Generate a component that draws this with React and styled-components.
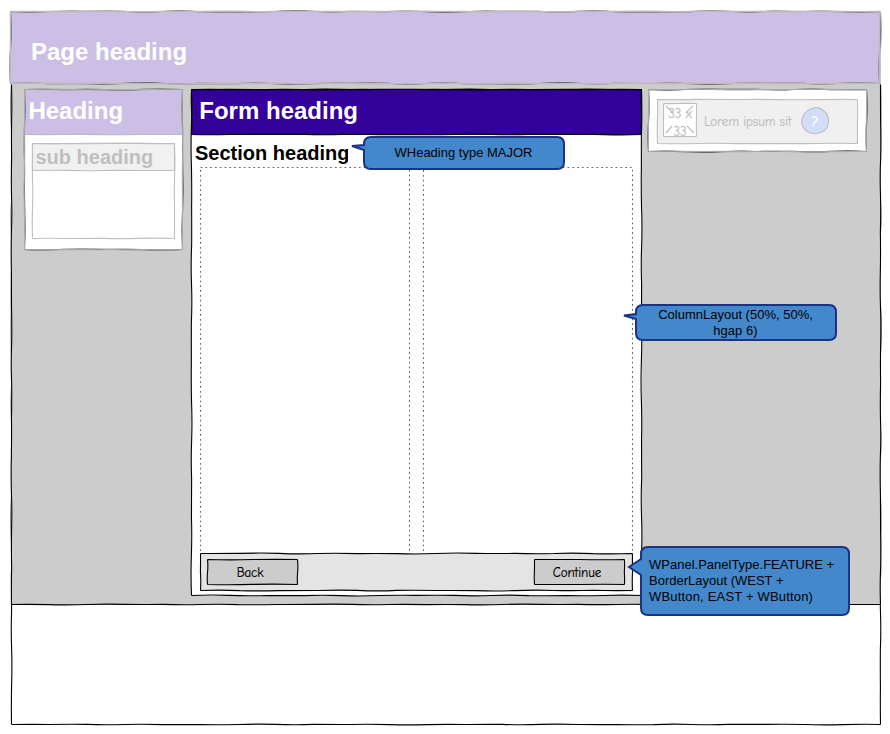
import React from "react";
import styled, { createGlobalStyle } from "styled-components";

const GlobalStyle = createGlobalStyle`
  *, *::before, *::after { box-sizing: border-box; }
  body { margin: 0; background: #fff; font-family: "Liberation Sans", Arial, sans-serif; }
`;

/* ---------- hand-drawn outlines ---------- */

const Overlay = styled.svg`
  position: absolute;
  left: 0;
  top: 0;
  overflow: visible;
  pointer-events: none;
`;

function wobble(x1, y1, x2, y2, seed, amp) {
  const length = Math.hypot(x2 - x1, y2 - y1);
  const steps = Math.max(2, Math.round(length / 38));
  const nx = (y2 - y1) / length;
  const ny = (x1 - x2) / length;
  let d = `M${x1} ${y1}`;
  for (let i = 1; i <= steps; i += 1) {
    const t = i / steps;
    const m = (i - 0.5) / steps;
    const bend = Math.sin(i * 2.3 + seed * 1.7) * amp;
    const off = i === steps ? 0 : Math.sin(i * 1.1 + seed) * amp * 0.2;
    d += `Q${(x1 + (x2 - x1) * m + nx * bend).toFixed(2)} ${(y1 + (y2 - y1) * m + ny * bend).toFixed(2)} ${(x1 + (x2 - x1) * t + nx * off).toFixed(2)} ${(y1 + (y2 - y1) * t + ny * off).toFixed(2)}`;
  }
  return d;
}

function outline(w, h, seed, amp, openTop = false) {
  const r = w - 0.5;
  const b = h - 0.5;
  return [
    openTop ? "" : wobble(0.5, 0.5, r, 0.5, seed, amp),
    wobble(r, 0.5, r, b, seed + 2, amp),
    wobble(r, b, 0.5, b, seed + 4, amp),
    wobble(0.5, b, 0.5, 0.5, seed + 6, amp),
  ].join("");
}

function Sketch({ w, h, seed = 1, color = "#000", under, amp = 0.7, openTop }) {
  return (
    <Overlay width={w} height={h} fill="none" strokeWidth="1.1" aria-hidden="true">
      {under && <path d={outline(w, h, seed + 3, 1.2)} stroke={under} />}
      <path d={outline(w, h, seed, amp, openTop)} stroke={color} />
    </Overlay>
  );
}

/* ---------- page frame ---------- */

const Page = styled.div`
  position: relative;
  width: 890px;
  height: 734px;
  padding: 11px 9px 9px 11px;
  overflow: hidden;
  background: #fff;
`;

const Frame = styled.div`
  position: relative;
  width: 870px;
  height: 714px;
  display: flex;
  flex-direction: column;
`;

const PageHeader = styled.header`
  position: relative;
  z-index: 1;
  width: 871px;
  height: 73px;
  margin-left: -1px;
  padding: 27px 0 0 21px;
  background: #cbbfe5;
`;

const Title = styled.h1`
  margin: 0;
  color: #fff;
  font-size: 24px;
  font-weight: 700;
  line-height: 28px;
  white-space: nowrap;
`;

const Body = styled.main`
  position: relative;
  height: 521px;
  display: grid;
  grid-template-columns: 159px 451px 219px;
  column-gap: 7px;
  align-items: start;
  padding: 5px 0 0 13px;
  background: #ccc;
`;

const PageFooter = styled.footer`
  flex: 1;
`;

/* ---------- panels ---------- */

const Panel = styled.section`
  position: relative;
  height: ${(p) => p.$height}px;
  margin: 0 ${(p) => -(p.$shift || 0)}px 0 ${(p) => p.$shift || 0}px;
  background: #fff;
`;

const PanelHeader = styled.div`
  position: relative;
  height: 46px;
  padding: 8px 0 0 ${(p) => p.$indent}px;
  background: ${(p) => p.$fill};
`;

const SubPanel = styled.div`
  position: relative;
  width: 143px;
  height: 96px;
  margin: 8px 0 0 7.5px;
`;

const SubHeader = styled.div`
  position: relative;
  height: 28px;
  padding: 3px 0 0 4px;
  background: #f1f1f1;
  color: #bfbfbf;
  font-size: 20px;
  font-weight: 700;
  line-height: 22px;
`;

const SectionHeading = styled.h2`
  width: 157px;
  height: 32px;
  margin: 0;
  padding: 7px 0 0 4px;
  overflow: hidden;
  font-size: 20px;
  font-weight: 700;
  line-height: 22px;
  white-space: nowrap;
`;

const Columns = styled.div`
  display: grid;
  grid-template-columns: 210px 210px;
  column-gap: 13px;
  height: 386px;
  margin-left: 9px;
`;

const Column = styled.div`
  position: relative;
`;

const FeaturePanel = styled.div`
  position: relative;
  display: flex;
  justify-content: space-between;
  width: 433px;
  height: 38px;
  margin-left: 9px;
  padding: 6px 8px 0 7px;
  background: #e4e4e4;
`;

const SketchButton = styled.button`
  position: relative;
  width: 91px;
  height: 26px;
  padding: 2px 5px 0 0;
  border: 0;
  background: #ccc;
  color: #000;
  font-family: "Comic Sans MS", "Comic Neue", Lato, sans-serif;
  font-size: 13px;
  line-height: 22px;
  letter-spacing: ${(p) => p.$tracking}px;
  -webkit-text-stroke: 0.2px #000;
`;

/* ---------- right-hand panel ---------- */

const InfoStrip = styled.div`
  position: relative;
  display: flex;
  align-items: flex-start;
  width: 201px;
  height: 45px;
  padding: 4px 0 0 6px;
  background: #f0f0f0;
  color: #bfbfbf;
  font-family: "Comic Sans MS", "Comic Neue", Lato, sans-serif;
`;

const InfoWrap = styled.div`
  padding: 10px 9px 9px;
`;

const Placeholder = styled.div`
  position: relative;
  flex: none;
  width: 34px;
  height: 34px;
  padding-top: 2px;
  background: #fff;
  font-size: 13px;
  line-height: 18px;
  text-align: center;
  white-space: pre;
  -webkit-text-stroke: 0.3px #bfbfbf;
`;

const InfoText = styled.span`
  flex: none;
  width: 98px;
  padding: 10px 0 0 7px;
  font-size: 13px;
  line-height: 18px;
  letter-spacing: -0.08px;
  white-space: nowrap;
  -webkit-text-stroke: 0.2px #bfbfbf;
`;

const Help = styled.div`
  position: relative;
  width: 28px;
  height: 28px;
  margin: 4px 0 0 6px;
  color: #fff;
  font-size: 14px;
  font-weight: 700;
  line-height: 30px;
  text-align: center;
`;

const HelpMark = styled.span`
  position: relative;
`;

/* ---------- annotations ---------- */

const CalloutBox = styled.aside`
  position: absolute;
  z-index: 2;
  left: ${(p) => p.$x}px;
  top: ${(p) => p.$y}px;
  width: ${(p) => p.$w}px;
  height: ${(p) => p.$h}px;
  display: flex;
  flex-direction: column;
  align-items: ${(p) => (p.$start ? "flex-start" : "center")};
  justify-content: center;
  padding: ${(p) => (p.$start ? "0 0 0 8px" : "0 1px 0 0")};
  color: #000;
  font-size: 13px;
  line-height: 16px;
`;

const CalloutLine = styled.span`
  position: relative;
  white-space: pre;
  letter-spacing: ${(p) => p.$tracking}px;
`;

function Callout({ x, y, w, h, tail, start, lines }) {
  const [tx, ty, top, bottom] = tail;
  const r = 7;
  const d = `M${r} 0H${w - r}Q${w} 0 ${w} ${r}V${h - r}Q${w} ${h} ${w - r} ${h}H${r}Q0 ${h} 0 ${h - r}V${bottom}L${tx} ${ty}L0 ${top}V${Math.min(r, top)}Q0 0 ${r} 0Z`;
  return (
    <CalloutBox $x={x} $y={y} $w={w} $h={h} $start={start}>
      <Overlay width={w} height={h}>
        <path d={d} fill="#4488cc" stroke="#1c3285" strokeWidth="2" strokeLinejoin="miter" />
      </Overlay>
      {lines.map(([text, tracking]) => (
        <CalloutLine key={text} $tracking={tracking}>{text}</CalloutLine>
      ))}
    </CalloutBox>
  );
}

function DottedOutline() {
  return (
    <Overlay width="210" height="386" fill="none" stroke="#6a6a6a" strokeWidth="1.1" strokeDasharray="1.8 3">
      <path d="M0.5 0.5H209.5V386.5H0.5Z" />
    </Overlay>
  );
}

function HeaderOutline() {
  return (
    <Overlay width="871" height="73" fill="none" strokeWidth="1.1">
      <path d={outline(870, 73, 5, 1.6)} stroke="#555" />
      <path d={outline(870, 73, 8, 0.7)} stroke="#bbb" strokeWidth="1.5" />
    </Overlay>
  );
}

export default function App() {
  return (
    <>
      <GlobalStyle />
      <Page>
        <Frame>
          <Sketch w={870} h={714} seed={9} openTop />
          <PageHeader>
            <Title>Page heading</Title>
            <HeaderOutline />
          </PageHeader>
          <Body>
            <Sketch w={870} h={521} seed={4} openTop />
            <Panel $height={161}>
              <PanelHeader $fill="#cbbfe5" $indent={4.4}>
                <Title as="h2">Heading</Title>
                <Sketch w={159} h={46} seed={2} color="#bbb" amp={0.4} />
              </PanelHeader>
              <SubPanel>
                <SubHeader>
                  sub heading
                  <Sketch w={143} h={28} seed={4} color="#bfbfbf" amp={0.5} />
                </SubHeader>
                <Sketch w={143} h={96} seed={5} color="#bfbfbf" />
              </SubPanel>
              <Sketch w={159} h={161} seed={7} color="#aaa" under="#444" />
            </Panel>

            <Panel $height={507} $shift={1}>
              <PanelHeader $fill="#330099" $indent={8.3}>
                <Title as="h2">Form heading</Title>
                <Sketch w={451} h={46} seed={3} amp={0.6} />
              </PanelHeader>
              <SectionHeading>Section heading</SectionHeading>
              <Columns>
                <Column><DottedOutline /></Column>
                <Column><DottedOutline /></Column>
              </Columns>
              <FeaturePanel>
                <Sketch w={433} h={38} seed={6} amp={0.9} />
                <SketchButton $tracking={-0.15}>
                  Back
                  <Sketch w={91} h={26} seed={5} />
                </SketchButton>
                <SketchButton $tracking={-0.1}>
                  Continue
                  <Sketch w={91} h={26} seed={8} />
                </SketchButton>
              </FeaturePanel>
              <Sketch w={451} h={507} seed={1} amp={0.8} />
            </Panel>

            <Panel $height={63}>
              <InfoWrap>
                <InfoStrip>
                  <Placeholder>
                    {"33 x\n33"}
                    <Sketch w={34} h={34} seed={2} color="#bfbfbf" amp={0.3} />
                    <Overlay width="34" height="34" stroke="#bfbfbf" strokeWidth="1.2">
                      <path d="M3 3L10 10M30 3L23 10M3 30L9 23M31 30L24 23" />
                    </Overlay>
                  </Placeholder>
                  <InfoText>Lorem ipsum sit</InfoText>
                  <Help>
                    <Overlay width="28" height="28">
                      <path
                        d="M11 1.3Q18 -.8 23 4Q28 8 27.5 14Q27.5 22 21 25Q14 28.5 7 25Q0 21 .8 13Q2 5 11 1.3Z"
                        fill="#d4ddf8"
                        stroke="#bfbfbf"
                        strokeWidth="1.1"
                      />
                    </Overlay>
                    <HelpMark>?</HelpMark>
                  </Help>
                  <Sketch w={201} h={45} seed={1} color="#bfbfbf" amp={0.5} />
                </InfoStrip>
              </InfoWrap>
              <Sketch w={219} h={63} seed={2} color="#aaa" under="#444" />
            </Panel>
          </Body>
          <PageFooter />
        </Frame>

        <Callout
          x={364} y={137} w={200} h={32} tail={[-12, 9, 8, 13]}
          lines={[["WHeading type MAJOR", 0]]}
        />
        <Callout
          x={636} y={305} w={200} h={35} tail={[-12, 10.5, 9, 14]}
          lines={[["ColumnLayout (50%, 50%,", 0], ["hgap 6)", 0.04]]}
        />
        <Callout
          x={641} y={547} w={208} h={68} tail={[-12, 20, 12, 28]} start
          lines={[
            ["WPanel.PanelType.FEATURE +", 0],
            ["BorderLayout (WEST +", 0],
            ["WButton, EAST + WButton)", 0.18],
          ]}
        />
      </Page>
    </>
  );
}
